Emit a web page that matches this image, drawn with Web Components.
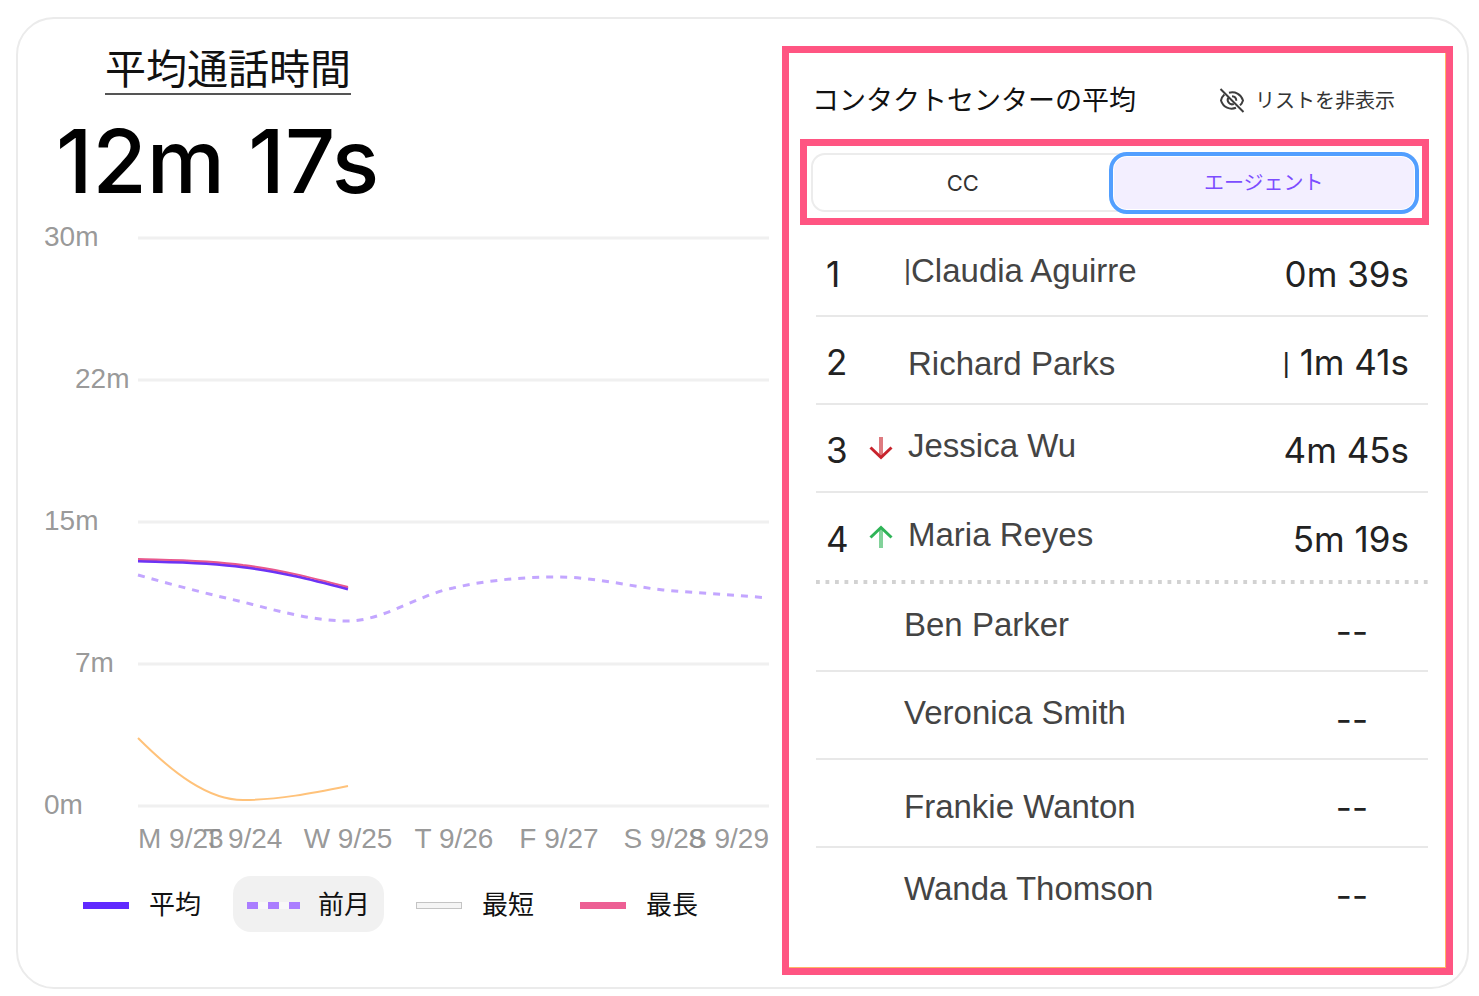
<!DOCTYPE html>
<html lang="ja">
<head>
<meta charset="utf-8">
<meta name="viewport" content="width=device-width, initial-scale=1">
<title>平均通話時間</title>
<style>
    body {
        margin: 0;
        padding: 17px 10px 6px 16px;
        background: #fff;
        color: #111;
        font-family: Inter, 'Noto Sans CJK JP', sans-serif;
    }
</style>
</head>
<body>
<metric-card>
    <metric-summary slot="main" label="平均通話時間" value="12m 17s">
        <trend-chart></trend-chart>
        <chart-legend></chart-legend>
    </metric-summary>
    <ranking-panel slot="side" heading="コンタクトセンターの平均">
        <segment-tabs></segment-tabs>
        <agent-table></agent-table>
    </ranking-panel>
</metric-card>

<script>
class MetricCard extends HTMLElement {
    constructor() {
        super();
        this.attachShadow({ mode: 'open' });
        this.shadowRoot.innerHTML = `
            <style>
                :host {
                    display: grid;
                    grid-template-columns: 764fr 671fr;
                    align-items: start;
                    padding: 27px 14px 12px 0;
                    border: 2px solid #ebebeb;
                    border-radius: 38px;
                    background: #fff;
                }
            </style>
            <slot name="main"></slot>
            <slot name="side"></slot>
        `;
    }
}

class MetricSummary extends HTMLElement {
    constructor() {
        super();
        this.attachShadow({ mode: 'open' });
        this.shadowRoot.innerHTML = `
            <style>
                :host {
                    display: block;
                    min-width: 0;
                }
                h1 {
                    width: max-content;
                    margin: 0 0 0 87px;
                    border-bottom: 2px solid #555;
                    font-size: 41px;
                    line-height: 47px;
                    font-weight: 400;
                    color: #111;
                }
                .value {
                    margin: 14px 0 7px 38px;
                    font-size: 88px;
                    line-height: 104px;
                    font-weight: 500;
                    color: #000;
                }
            </style>
            <h1>${this.getAttribute('label')}</h1>
            <p class="value">${this.getAttribute('value')}</p>
            <slot></slot>
        `;
    }
}

class TrendChart extends HTMLElement {
    constructor() {
        super();
        this.attachShadow({ mode: 'open' });

        // label, label x, line y
        const ticks = [
            ['30m', 26, 18],
            ['22m', 57, 160],
            ['15m', 26, 302],
            ['7m', 57, 444],
            ['0m', 26, 586]
        ];
        const days = [
            ['M 9/23', 120, 'start'],
            ['T 9/24', 225, 'middle'],
            ['W 9/25', 330, 'middle'],
            ['T 9/26', 436, 'middle'],
            ['F 9/27', 541, 'middle'],
            ['S 9/28', 646, 'middle'],
            ['S 9/29', 751, 'end']
        ];

        this.shadowRoot.innerHTML = `
            <style>
                :host {
                    display: block;
                }
                svg {
                    display: block;
                    width: 100%;
                    height: auto;
                }
                text {
                    font-family: 'Liberation Sans', sans-serif;
                    font-size: 28px;
                    fill: #8c8c8c;
                    fill-opacity: .9;
                }
                .grid {
                    stroke: #f0f0f0;
                    stroke-width: 3;
                }
                .series {
                    fill: none;
                    stroke-width: 3;
                }
                .thin {
                    stroke-width: 2;
                }
            </style>
            <svg viewBox="0 0 764 644" role="img" aria-label="平均通話時間の推移">
                ${ticks.map(([label, x, y]) => `
                    <line class="grid" x1="120" y1="${y}" x2="751" y2="${y}"/>
                    <text x="${x}" y="${y + 8}">${label}</text>`).join('')}
                ${days.map(([label, x, anchor]) => `
                    <text x="${x}" y="628" text-anchor="${anchor}">${label}</text>`).join('')}
                <path class="series" stroke="#c3a6ff" stroke-dasharray="7 7" d="M120 355 C155 365 190 374 225 382 C260 391 295 401 330 401 C365 401 400 375 435 368 C470 360 505 357 540 357 C575 357 610 366 645 370 C680 373 715 375 751 378"/>
                <path class="series thin" stroke="#ffc27a" d="M120 518 C155 553 190 580 225 580 C260 580 295 573 330 566"/>
                <path class="series" stroke="#6c33f5" d="M120 341 C155 342 190 342 225 347 C260 351 295 360 330 369"/>
                <path class="series thin" stroke="#e8588e" d="M120 339 C155 340 190 340 225 345 C260 349 295 358 330 367"/>
            </svg>
        `;
    }
}

class ChartLegend extends HTMLElement {
    constructor() {
        super();
        this.attachShadow({ mode: 'open' });
        this.shadowRoot.innerHTML = `
            <style>
                :host {
                    display: flex;
                    gap: 18px;
                    margin-top: 12px;
                    padding-left: 51px;
                }
                button {
                    display: flex;
                    align-items: center;
                    gap: 20px;
                    height: 56px;
                    padding: 2px 14px 0;
                    border: 0;
                    border-radius: 18px;
                    background: none;
                    color: #111;
                    font: inherit;
                    font-size: 26px;
                    line-height: 36px;
                    white-space: nowrap;
                    cursor: pointer;
                }
                button[aria-pressed="true"] {
                    background: #f1f1f1;
                }
                .swatch {
                    box-sizing: border-box;
                    flex: none;
                    width: 46px;
                    height: 7px;
                }
                .average { background: #6029ff; }
                .longest { background: #ed5f94; }
                .shortest {
                    border: 1px solid #c4c4c4;
                    background: #f5f5f5;
                }
                .previous {
                    width: 53px;
                    margin-right: -2px;
                    background: repeating-linear-gradient(90deg, #aa7dff 0 11px, #f8f8f8 11px 21px);
                }
            </style>
            <button type="button"><span class="swatch average"></span>平均</button>
            <button type="button" aria-pressed="true"><span class="swatch previous"></span>前月</button>
            <button type="button"><span class="swatch shortest"></span>最短</button>
            <button type="button"><span class="swatch longest"></span>最長</button>
        `;
    }
}

class RankingPanel extends HTMLElement {
    constructor() {
        super();
        this.attachShadow({ mode: 'open' });
        this.shadowRoot.innerHTML = `
            <style>
                :host {
                    display: block;
                    min-width: 0;
                    padding-bottom: 32px;
                    border: 7px solid #ff5582;
                    box-shadow: inset -1px -1px #ffb464;
                }
                header {
                    display: flex;
                    justify-content: space-between;
                    align-items: center;
                    padding: 28px 51px 18px 23px;
                }
                h2 {
                    margin: 0;
                    font-size: 27px;
                    line-height: 40px;
                    font-weight: 400;
                    color: #111;
                    white-space: nowrap;
                }
                button {
                    display: flex;
                    align-items: center;
                    gap: 10px;
                    padding: 0;
                    border: 0;
                    background: none;
                    color: #333;
                    font: inherit;
                    font-size: 20px;
                    line-height: 40px;
                    white-space: nowrap;
                    cursor: pointer;
                }
                svg {
                    width: 26px;
                    height: 26px;
                    fill: none;
                    stroke: #3d3d3d;
                    stroke-width: 2;
                }
            </style>
            <header>
                <h2>${this.getAttribute('heading')}</h2>
                <button type="button">
                    <svg viewBox="0 0 26 26" aria-hidden="true">
                        <path d="M1.5 1 L24.5 24"/>
                        <path d="M10 4.8 C16 3.2 22 6 24 12.5 C23.4 14.6 22.4 16 21 17.4"/>
                        <path d="M5.4 6.6 C3.6 8.2 2.6 10 2 12.5 C4.2 19.6 11 22.2 17 19.8"/>
                        <path d="M13 8.2 C15.6 8.3 17.3 10.3 17.3 12.8"/>
                        <path d="M9.3 9.8 C7.4 13 10.4 17.6 14.8 16"/>
                    </svg>
                    リストを非表示
                </button>
            </header>
            <slot></slot>
        `;
    }
}

class SegmentTabs extends HTMLElement {
    constructor() {
        super();
        this.attachShadow({ mode: 'open' });
        this.shadowRoot.innerHTML = `
            <style>
                :host {
                    display: block;
                    margin: 0 17px 0 11px;
                    padding: 7px 4px 6px;
                    border: 7px solid #ff5582;
                }
                .group {
                    display: grid;
                    grid-template-columns: 1fr 1fr;
                    height: 59px;
                    border-radius: 14px;
                    box-shadow: inset 0 0 0 2px #ececec;
                }
                button {
                    padding: 0;
                    border: 0;
                    background: none;
                    color: #333;
                    font: inherit;
                    font-size: 22px;
                    line-height: 32px;
                    cursor: pointer;
                }
                button[aria-selected="true"] {
                    margin: -1px -1px -2px -6px;
                    border: 4px solid #529fff;
                    border-radius: 18px;
                    background: #f3efff;
                    box-shadow: inset 0 0 0 1px #fff;
                    color: #7c4dff;
                    font-size: 20px;
                }
            </style>
            <div class="group" role="tablist">
                <button type="button" role="tab" aria-selected="false">CC</button>
                <button type="button" role="tab" aria-selected="true">エージェント</button>
            </div>
        `;
        this.shadowRoot.querySelectorAll('button').forEach(button => {
            button.addEventListener('click', () => this.select(button));
        });
    }

    select(active) {
        this.shadowRoot.querySelectorAll('button').forEach(button => {
            button.setAttribute('aria-selected', String(button === active));
        });
    }
}

class TrendArrow extends HTMLElement {
    constructor() {
        super();
        this.attachShadow({ mode: 'open' });
        const up = this.getAttribute('direction') === 'up';
        this.shadowRoot.innerHTML = `
            <style>
                :host {
                    display: block;
                    color: ${up ? '#2fb457' : '#c8232c'};
                }
                svg {
                    display: block;
                    width: 24px;
                    height: 24px;
                    fill: none;
                    stroke: currentColor;
                    stroke-width: 3;
                }
                .stem {
                    stroke-opacity: .6;
                    stroke-width: 4;
                }
            </style>
            <svg viewBox="0 0 24 24" role="img" aria-label="${up ? '上昇' : '下降'}">
                ${up
                    ? '<path class="stem" d="M12 23 V4"/><path d="M1.5 12.5 L12 2.5 L22.5 12.5"/>'
                    : '<path class="stem" d="M12 1 V20"/><path d="M1.5 11.5 L12 21.5 L22.5 11.5"/>'}
            </svg>
        `;
    }
}

class AgentTable extends HTMLElement {
    constructor() {
        super();
        this.attachShadow({ mode: 'open' });

        const agents = [
            { rank: 1, name: 'Claudia Aguirre', value: '0m 39s', nameMark: true },
            { rank: 2, name: 'Richard Parks', value: '1m 41s', valueMark: true, low: true },
            { rank: 3, name: 'Jessica Wu', value: '4m 45s', trend: 'down' },
            { rank: 4, name: 'Maria Reyes', value: '5m 19s', trend: 'up' },
            { name: 'Ben Parker' },
            { name: 'Veronica Smith' },
            { name: 'Frankie Wanton', low: true },
            { name: 'Wanda Thomson' }
        ];

        this.shadowRoot.innerHTML = `
            <style>
                :host {
                    display: block;
                    margin: 4px 18px 0 27px;
                }
                table {
                    width: 100%;
                    border-spacing: 0;
                    color: #222;
                    font-size: 35px;
                    line-height: 40px;
                    white-space: nowrap;
                }
                td, th {
                    box-sizing: border-box;
                    height: 88px;
                    padding: 0;
                    border-bottom: 2px solid #e8e8e8;
                    font-weight: 400;
                    text-align: left;
                }
                /* ranked agents end with a dotted rule */
                .last td, .last th {
                    height: 91px;
                    border-bottom: 4px solid transparent;
                }
                .last {
                    background: linear-gradient(90deg, #d2d2d2 4px, transparent 4px) 0 100% / calc((100% - 4px) / 64) 4px repeat-x;
                }
                tr:last-child > * {
                    border-bottom-color: transparent;
                }
                .rank {
                    width: 53px;
                    padding: 4px 0 0 10px;
                }
                .trend {
                    width: 35px;
                }
                .name {
                    padding-bottom: 4px;
                    color: #444;
                    font-family: 'Liberation Sans', sans-serif;
                    font-size: 33px;
                }
                .name.low {
                    padding-top: 8px;
                    padding-bottom: 0;
                }
                .name.indent {
                    padding-left: 4px;
                }
                .mark {
                    font-family: 'Liberation Sans', sans-serif;
                    font-size: 27px;
                    vertical-align: 3px;
                }
                .value {
                    padding: 4px 19px 0 0;
                    text-align: right;
                }
                .value.empty {
                    padding: 8px 60px 0 0;
                }
            </style>
            <table>
                <tbody>
                    ${agents.map(agent => this.row(agent)).join('')}
                </tbody>
            </table>
        `;
    }

    row({ rank, name, value, trend, nameMark, valueMark, low }) {
        const nameClass = ['name', low ? 'low' : '', rank && !nameMark ? 'indent' : ''].join(' ');
        return `
            <tr class="${rank === 4 ? 'last' : ''}">
                <td class="rank">${rank || ''}</td>
                <td class="trend">${trend ? `<trend-arrow direction="${trend}"></trend-arrow>` : ''}</td>
                <th scope="row" class="${nameClass}">${nameMark ? '<span class="mark">|</span>' : ''}${name}</th>
                <td class="value ${value ? '' : 'empty'}">${valueMark ? '<span class="mark">|</span> ' : ''}${value || '--'}</td>
            </tr>
        `;
    }
}

customElements.define('metric-card', MetricCard);
customElements.define('metric-summary', MetricSummary);
customElements.define('trend-chart', TrendChart);
customElements.define('chart-legend', ChartLegend);
customElements.define('ranking-panel', RankingPanel);
customElements.define('segment-tabs', SegmentTabs);
customElements.define('trend-arrow', TrendArrow);
customElements.define('agent-table', AgentTable);
</script>
</body>
</html>
